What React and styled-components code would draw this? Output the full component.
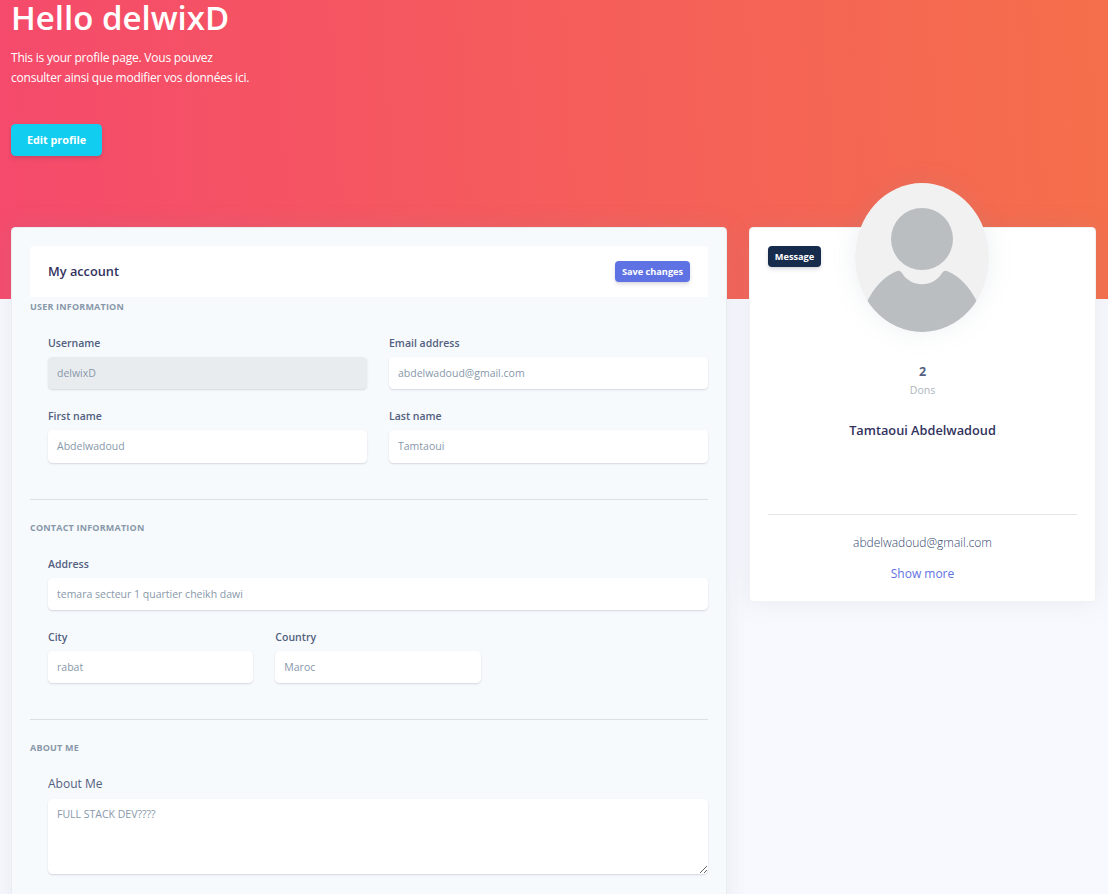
import React from 'react';
import styled, { createGlobalStyle } from 'styled-components';

const GlobalStyle = createGlobalStyle`
  * { box-sizing: border-box; }
  html, body { margin: 0; height: 894px; overflow: hidden; }
  body {
    background: #f8f9fe;
    color: #525f7f;
    font-family: 'Open Sans', sans-serif;
    font-size: 12px;
    line-height: 18px;
  }
  h1, h3, h6, p { margin: 0; }
`;

const Page = styled.div`
  height: 894px;
  overflow: hidden;
  background: linear-gradient(87deg, #f54a6c 0, #f56f4b 100%) 0 0 / 100% 299px no-repeat;
`;

const Hero = styled.header`
  height: 227px;
  padding-left: 11px;
  color: #fff;
`;

const Title = styled.h1`
  height: 48px;
  padding-top: 1px;
  font-size: 33px;
  font-weight: 600;
  line-height: 34px;
  white-space: nowrap;
`;

const Intro = styled.p`
  width: 270px;
  height: 76px;
  font-size: 12px;
  line-height: 20px;
  letter-spacing: -0.22px;
`;

const Button = styled.button`
  display: inline-flex;
  align-items: center;
  justify-content: center;
  width: ${(p) => p.$width}px;
  height: ${(p) => (p.$large ? 32 : 21)}px;
  padding: 0 0 ${(p) => (p.$large ? 2 : 0)}px;
  border: 0;
  border-radius: ${(p) => (p.$large ? 4.5 : 4)}px;
  background: ${(p) => p.$color};
  box-shadow: 0 3px 4px rgba(50, 50, 93, 0.11), 0 1px 2px rgba(0, 0, 0, 0.08);
  color: #fff;
  font-family: inherit;
  font-size: ${(p) => (p.$large ? 10.8 : 9.2)}px;
  font-weight: 700;
  white-space: nowrap;
`;

const Columns = styled.main`
  display: grid;
  grid-template-columns: 716px 347px;
  align-items: start;
  gap: 22px;
  padding-left: 11px;
`;

const Card = styled.section`
  border: 1px solid rgba(0, 0, 0, 0.05);
  border-radius: 4.5px;
  background: ${(p) => p.$background};
  background-clip: border-box;
  box-shadow: 0 0 24px rgba(136, 152, 170, 0.15);
`;

const AccountCard = styled(Card)`
  height: 700px;
  padding: 18px;
`;

const AccountHeader = styled.div`
  display: flex;
  align-items: center;
  justify-content: space-between;
  height: 51px;
  padding: 0 18px;
  margin-bottom: 2px;
  border-radius: 4px 4px 0 0;
  background: #fff;
`;

const Heading = styled.h3`
  padding-bottom: ${(p) => (p.$raised ? 2 : 0)}px;
  color: #32325d;
  font-size: 12.75px;
  font-weight: 600;
`;

const SectionTitle = styled.h6`
  height: 16px;
  margin-bottom: 19px;
  color: #8898aa;
  font-size: 9px;
  font-weight: 700;
  line-height: 16px;
  letter-spacing: 0.2px;
  text-transform: uppercase;
`;

const Fields = styled.div`
  display: grid;
  grid-template-columns: repeat(${(p) => p.$columns}, 1fr);
  gap: 18px 22px;
  padding-left: 18px;
  margin-bottom: ${(p) => p.$after}px;
`;

const Field = styled.label`
  display: flex;
  flex-direction: column;
  gap: 5px;
  grid-column: ${(p) => (p.$full ? '1 / -1' : 'auto')};
`;

const Label = styled.span`
  padding-bottom: ${(p) => (p.$plain ? 1 : 0)}px;
  font-size: ${(p) => (p.$plain ? 12 : 10.5)}px;
  font-weight: ${(p) => (p.$plain ? 400 : 600)};
  line-height: 18px;
`;

const Input = styled.input`
  width: 100%;
  height: ${(p) => (p.$tall ? 33 : 32)}px;
  padding: 0 9px ${(p) => (p.$tall ? 1 : 0)}px;
  border: 0;
  border-radius: 4.5px;
  outline: 0;
  background: ${(p) => (p.disabled ? '#e9ecef' : '#fff')};
  box-shadow: 0 1px 2px rgba(50, 50, 93, 0.15), 0 1px 0 rgba(0, 0, 0, 0.02);
  color: #8898aa;
  font-family: inherit;
  font-size: 10.5px;
`;

const TextArea = styled(Input)`
  display: block;
  height: 75px;
  padding: 6px 9px;
  line-height: 18px;
  resize: vertical;
`;

const Divider = styled.div`
  height: 1px;
  margin-bottom: ${(p) => p.$after}px;
  background: rgba(0, 0, 0, 0.1);
`;

const ProfileCard = styled(Card)`
  position: relative;
  height: 375px;
  padding: 18px;
`;

const Avatar = styled.div`
  position: absolute;
  top: -45px;
  left: 105px;
  width: 134px;
  height: 149px;
  border-radius: 50%;
  overflow: hidden;
  box-shadow: 0 0 24px rgba(136, 152, 170, 0.15);
  svg { display: block; }
`;

const ProfileBody = styled.div`
  display: flex;
  flex-direction: column;
  align-items: center;
  padding-top: 96px;
`;

const Count = styled.strong`
  font-size: 12.5px;
  font-weight: 700;
  line-height: 18px;
`;

const Caption = styled.span`
  margin-bottom: 22px;
  color: #adb5bd;
  font-size: 10.5px;
  line-height: 18px;
`;

const ProfileDivider = styled(Divider)`
  align-self: stretch;
  margin-top: 75px;
`;

const Email = styled.span`
  margin-bottom: 13px;
  font-size: 12px;
  font-weight: 300;
  color: #32466f;
`;

const Link = styled.a`
  color: #5e72e4;
  font-size: 12px;
`;

const TextField = ({ label, value, full, tall, disabled }) => (
  <Field $full={full}>
    <Label>{label}</Label>
    <Input defaultValue={value} disabled={disabled} $tall={tall} />
  </Field>
);

export default function App() {
  return (
    <>
      <GlobalStyle />
      <Page>
        <Hero>
          <Title>Hello delwixD</Title>
          <Intro>
            This is your profile page. Vous pouvez
            <br />
            consulter ainsi que modifier vos données ici.
          </Intro>
          <Button $large $width={91} $color="#11cdef">Edit profile</Button>
        </Hero>
        <Columns>
          <AccountCard $background="#f7fafc">
            <AccountHeader>
              <Heading $raised>My account</Heading>
              <Button $width={75} $color="#5e72e4">Save changes</Button>
            </AccountHeader>
            <SectionTitle>User information</SectionTitle>
            <Fields $columns={2} $after={36}>
              <TextField label="Username" value="delwixD" disabled />
              <TextField label="Email address" value="abdelwadoud@gmail.com" />
              <TextField label="First name" value="Abdelwadoud" tall />
              <TextField label="Last name" value="Tamtaoui" tall />
            </Fields>
            <Divider $after={20} />
            <SectionTitle>Contact information</SectionTitle>
            <Fields $columns={3} $after={36}>
              <TextField label="Address" value="temara secteur 1 quartier cheikh dawi" full />
              <TextField label="City" value="rabat" />
              <TextField label="Country" value="Maroc" />
            </Fields>
            <Divider $after={20} />
            <SectionTitle>About me</SectionTitle>
            <Fields $columns={1} $after={0}>
              <Field>
                <Label $plain>About Me</Label>
                <TextArea as="textarea" defaultValue="FULL STACK DEV????" />
              </Field>
            </Fields>
          </AccountCard>
          <ProfileCard $background="#fff">
            <Avatar>
              <svg width="134" height="149" viewBox="0 0 134 149">
                <rect width="134" height="149" fill="#f1f1f1" />
                <circle cx="67" cy="56" r="31" fill="#babec1" />
                <path
                  d="M12.3 118C19 105 29 93 42 88Q45 87 47 90C56 105 78 105 87 90Q89 87 92 88C105 93 115 105 121.7 118V149H12.3Z"
                  fill="#babec1"
                />
              </svg>
            </Avatar>
            <Button $width={53} $color="#172b4d">Message</Button>
            <ProfileBody>
              <Count>2</Count>
              <Caption>Dons</Caption>
              <Heading>Tamtaoui Abdelwadoud</Heading>
              <ProfileDivider $after={19} />
              <Email>abdelwadoud@gmail.com</Email>
              <Link>Show more</Link>
            </ProfileBody>
          </ProfileCard>
        </Columns>
      </Page>
    </>
  );
}
